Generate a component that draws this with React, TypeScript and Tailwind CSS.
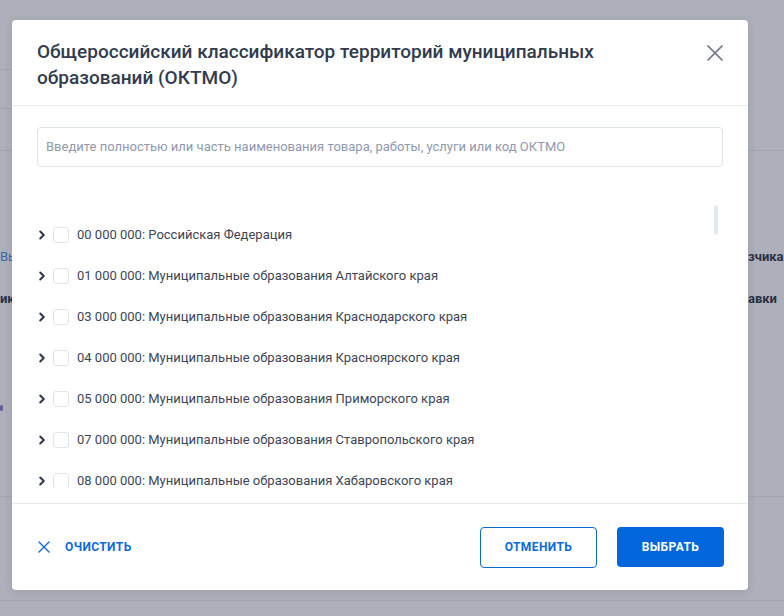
import React from 'react';
import { ChevronRight } from 'lucide-react';

const rows = [
  '00 000 000: Российская Федерация',
  '01 000 000: Муниципальные образования Алтайского края',
  '03 000 000: Муниципальные образования Краснодарского края',
  '04 000 000: Муниципальные образования Красноярского края',
  '05 000 000: Муниципальные образования Приморского края',
  '07 000 000: Муниципальные образования Ставропольского края',
  '08 000 000: Муниципальные образования Хабаровского края',
];

const Cross: React.FC<{ size: number; className?: string; stroke?: number }> = ({ size, className, stroke = 1.6 }) => (
  <svg width={size} height={size} viewBox={`0 0 ${size} ${size}`} className={className} fill="none">
    <path d={`M1 1L${size - 1} ${size - 1}M${size - 1} 1L1 ${size - 1}`} stroke="currentColor" strokeWidth={stroke} strokeLinecap="round" />
  </svg>
);

// page under the overlay: only its edges show on both sides of the modal
const BackgroundPage: React.FC = () => (
  <div className="flex h-[616px] w-full">
    <div className="flex w-[392px] flex-col">
      <div className="h-[69px]" />
      <div className="h-px bg-[#a0a5b1]" />
      <div className="h-[38px]" />
      <div className="h-px bg-[#a0a5b1]" />
      <div className="h-[41px]" />
      <div className="h-px bg-[#a0a5b1]" />
      <div className="h-[97px]" />
      <div className="h-[42px] text-[13px] leading-[18px] text-[#3f68a8]">Вы</div>
      <div className="h-[18px] text-[13px] font-bold leading-[18px] text-[#2a3142]">ик</div>
      <div className="h-[97px]" />
      <div className="h-[6px] w-[3px] rounded-full bg-[#6b5a9a]" />
      <div className="h-[85px]" />
      <div className="h-px bg-[#a0a5b1]" />
      <div className="h-[103px]" />
      <div className="h-px bg-[#a0a5b1]" />
    </div>
    <div className="flex flex-1 flex-col">
      <div className="h-[150px]" />
      <div className="h-px bg-[#a0a5b1]" />
      <div className="h-[97px]" />
      <div className="flex h-[42px]">
        <div className="w-[356px]" />
        <span className="text-[13px] font-bold leading-[18px] text-[#2a3142]">зчика</span>
      </div>
      <div className="flex h-[18px]">
        <div className="w-[356px]" />
        <span className="text-[13px] font-bold leading-[18px] text-[#2a3142]">авки</span>
      </div>
      <div className="h-[188px]" />
      <div className="h-px bg-[#a0a5b1]" />
      <div className="h-[103px]" />
      <div className="h-px bg-[#a0a5b1]" />
    </div>
  </div>
);

const App: React.FC = () => {
  return (
    <div className="relative h-[616px] w-[784px] overflow-hidden bg-[#adb0ba] font-['Roboto','Liberation_Sans',sans-serif]">
      <BackgroundPage />

      <div className="absolute left-[12px] top-[20px] flex h-[570px] w-[736px] flex-col rounded-[4px] bg-white shadow-[0_2px_10px_rgba(30,40,60,0.12)]">
        {/* header */}
        <div className="flex items-start justify-between border-b border-[#e6e9f0] pb-[14px] pl-[25px] pr-[25px] pt-[19px]">
          <h2 className="w-[590px] text-[19px] font-medium leading-[26px] text-[#323b4e]">
            Общероссийский классификатор территорий муниципальных образований (ОКТМО)
          </h2>
          <button className="mt-[6px] text-[#6b7385]">
            <Cross size={16} stroke={1.7} />
          </button>
        </div>

        {/* body */}
        <div className="flex flex-1 flex-col px-[25px] pb-[15px] pt-[21px]">
          <div className="flex h-[40px] items-center rounded-[4px] border border-[#dde2ea] px-[8px]">
            <span className="text-[13px] text-[#8f99ae]">
              Введите полностью или часть наименования товара, работы, услуги или код ОКТМО
            </span>
          </div>

          <div className="relative mt-[20px] h-[301px] overflow-hidden">
            <div className="absolute right-[5px] top-[18px] h-[30px] w-[4px] rounded-full bg-[#e3e9f2]" />
            <div className="flex flex-col pt-[27px]">
              {rows.map((r) => (
                <div key={r} className="flex h-[41px] shrink-0 items-center">
                  <ChevronRight size={14} strokeWidth={3.5} className="-ml-[2px] text-[#2f394d]" />
                  <div className="ml-[4px] h-[16px] w-[16px] rounded-[3px] border border-[#dfe4ec] bg-white" />
                  <span className="ml-[8px] text-[13px] text-[#3c4556]">{r}</span>
                </div>
              ))}
            </div>
          </div>
        </div>

        {/* footer */}
        <div className="flex h-[88px] items-center justify-between border-t border-[#e6e9f0] pl-[26px] pr-[24px]">
          <button className="flex items-center gap-[15px] text-[#0b6ad8]">
            <Cross size={12} stroke={1.4} />
            <span className="text-[12px] font-bold tracking-[0.4px]">ОЧИСТИТЬ</span>
          </button>
          <div className="flex items-center gap-[20px]">
            <button className="flex h-[41px] w-[117px] items-center justify-center rounded-[4px] border border-[#0b6ad8] text-[12px] font-bold tracking-[0.4px] text-[#0b6ad8]">
              ОТМЕНИТЬ
            </button>
            <button className="flex h-[40px] w-[107px] items-center justify-center rounded-[4px] bg-[#0066dc] text-[12px] font-bold tracking-[0.4px] text-white">
              ВЫБРАТЬ
            </button>
          </div>
        </div>
      </div>
    </div>
  );
};

export default App;
